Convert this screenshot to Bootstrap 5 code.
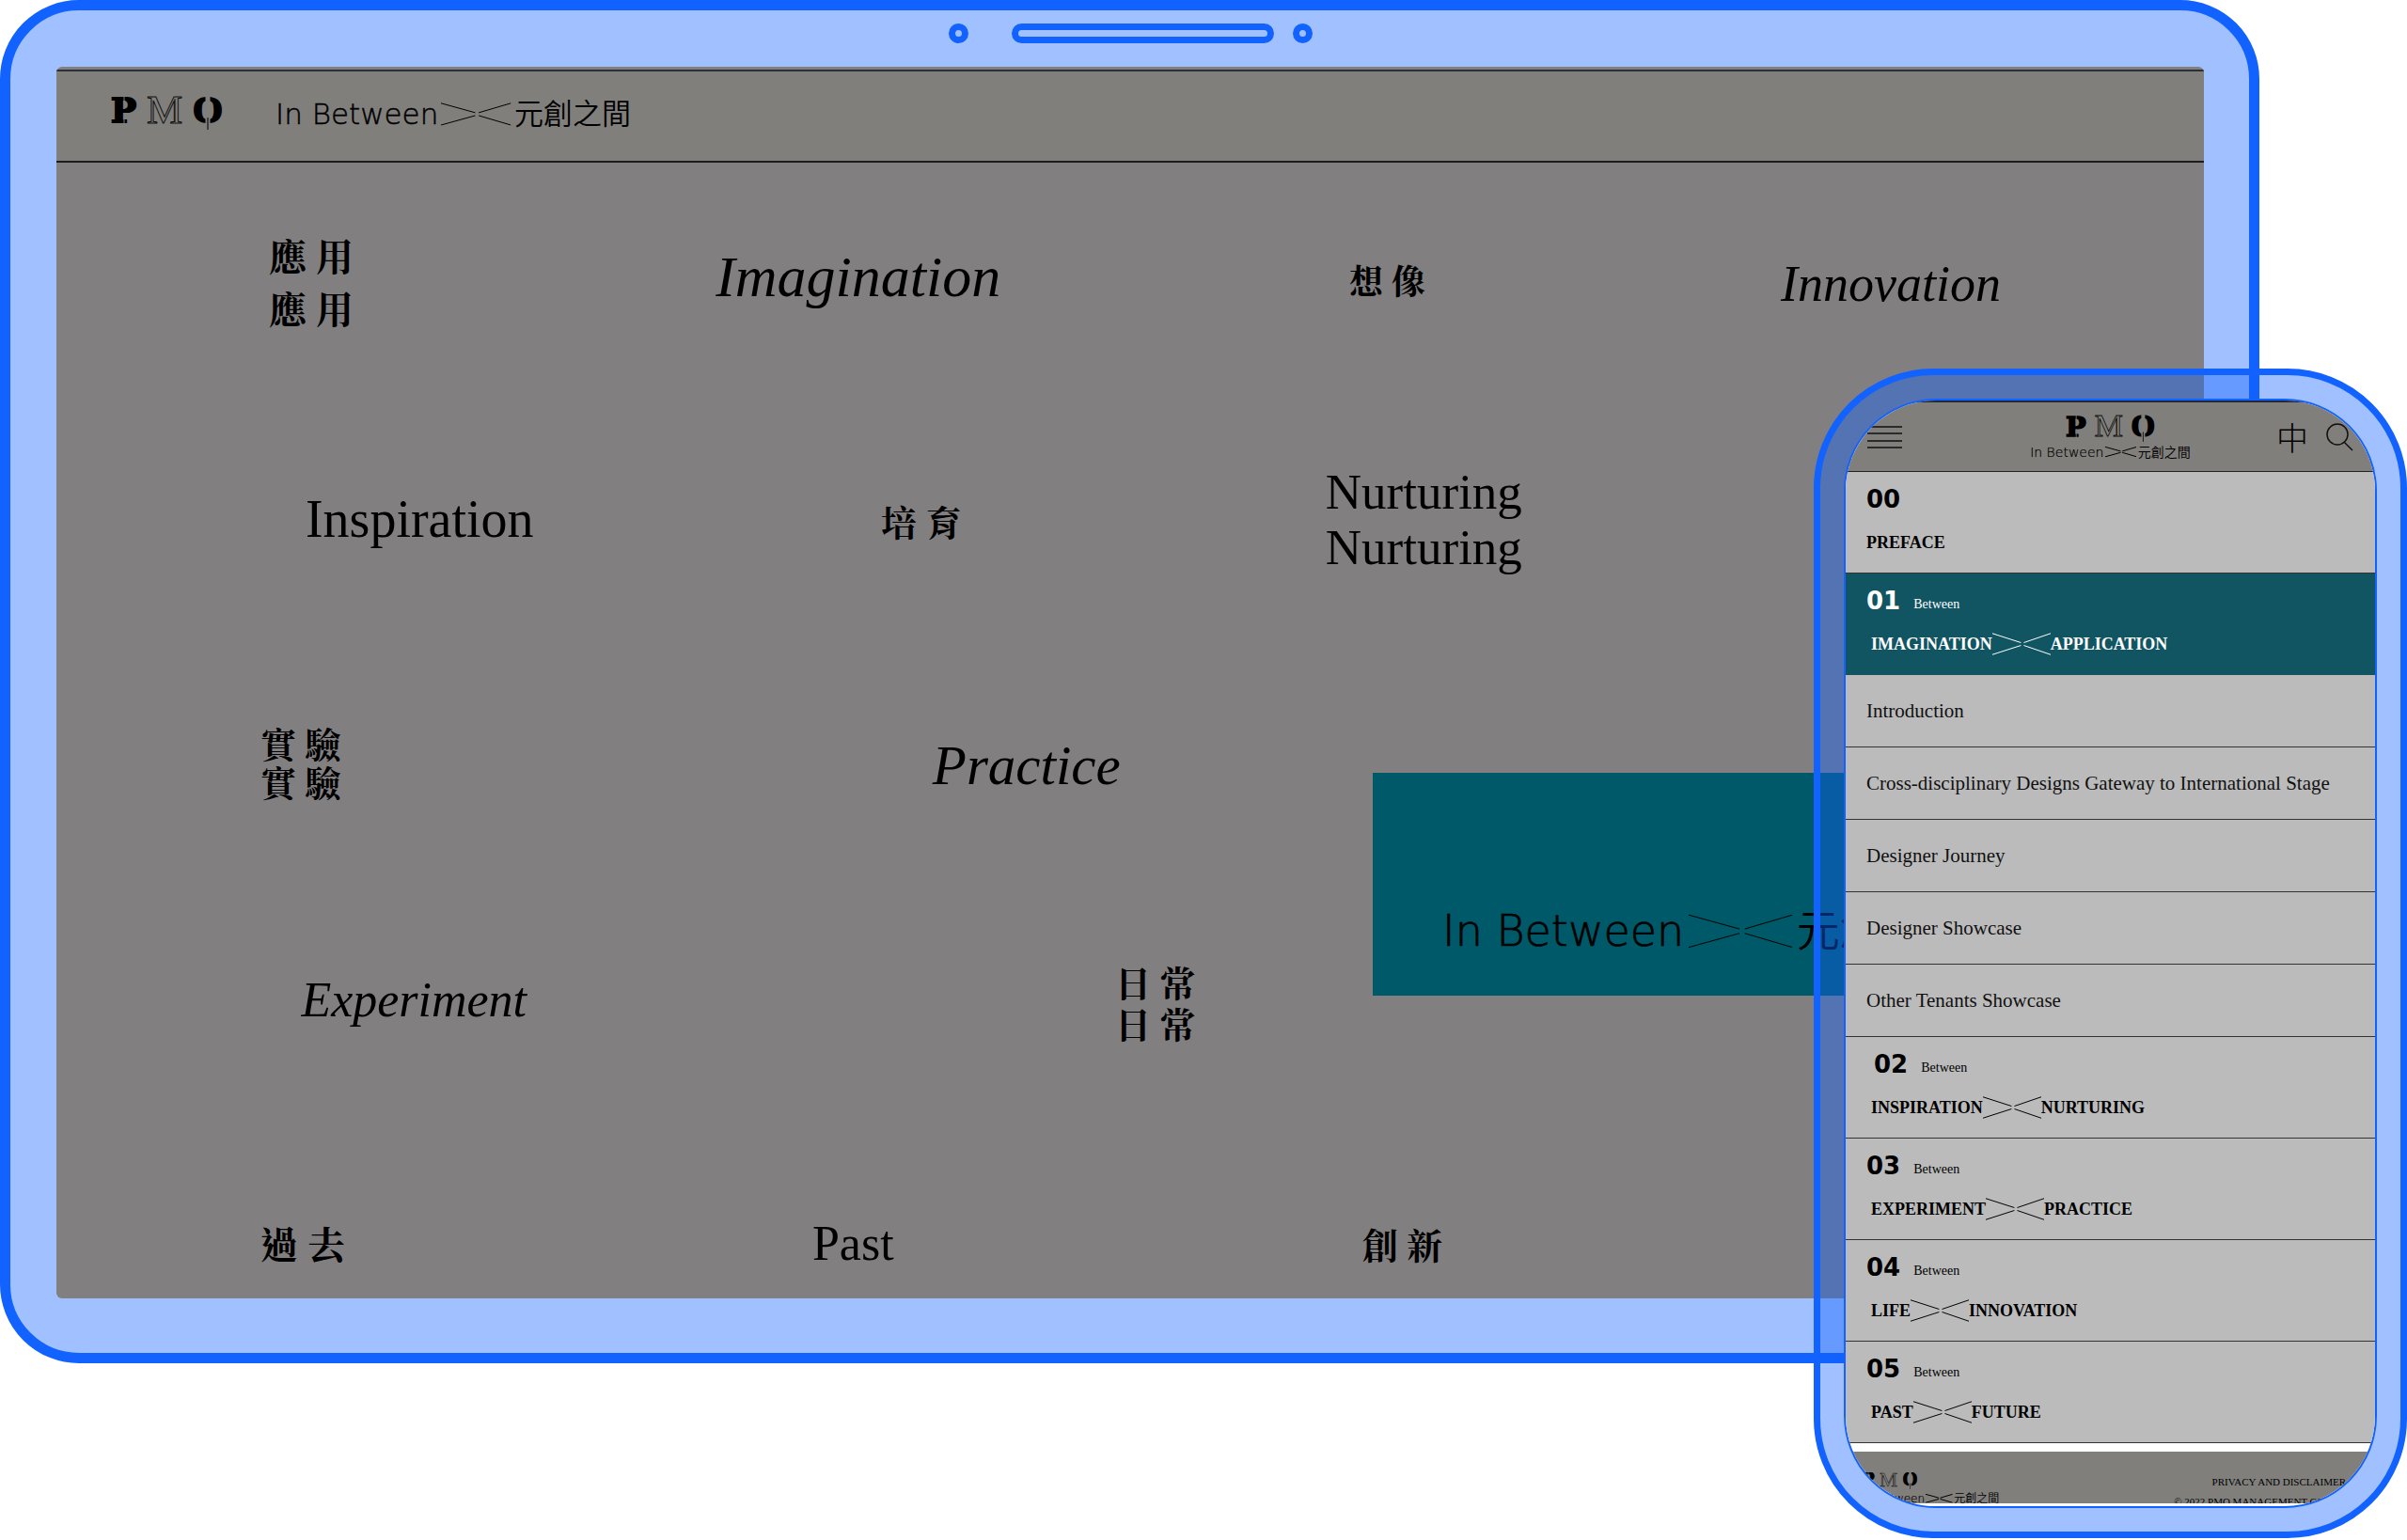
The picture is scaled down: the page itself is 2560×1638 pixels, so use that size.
<!DOCTYPE html>
<html lang="en">
<head>
<meta charset="utf-8">
<meta name="viewport" content="width=device-width, initial-scale=1">
<title>PMQ – In Between 元創之間</title>
<link href="https://cdn.jsdelivr.net/npm/bootstrap@5.3.0/dist/css/bootstrap.min.css" rel="stylesheet">
<style>
  :root {
    --frame: #1262ff;
    --glass: rgba(18, 98, 255, .4);
    --stone: #817f7f;
    --bar: #807f7c;
    --paper: #bbbbbb;
    --teal: #005968;
    --serif: "Liberation Serif", "Noto Serif CJK TC", "Noto Sans CJK TC", serif;
    --wide: "DejaVu Sans", "Noto Sans CJK TC", sans-serif;
  }
  body { font-family: var(--serif); color: #000; background: #fff; }
  a { color: inherit; text-decoration: none; }

  /* both devices share one grid cell so the phone lies over the tablet */
  .stage { display: grid; grid-template-columns: minmax(0, 1fr); align-items: start; }
  .stage > * { grid-area: 1 / 1; }

  .tablet {
    margin-right: 157px;
    border: 11px solid var(--frame);
    border-radius: 84px;
    background: var(--glass);
    padding: 0 48px 58px 49px;
  }
  .sensors { height: 60px; padding-top: 14px; }
  .lens, .speaker { height: 21px; border: 7px solid var(--frame); border-radius: 11px; }
  .lens { width: 21px; }
  .speaker { width: 279px; margin: 0 20px 0 46px; }

  .desk { background: var(--stone); border-radius: 6px; padding-top: 3px; overflow: hidden; }
  .desk-bar {
    background: var(--bar);
    border-top: 2px solid #2c3038;
    border-bottom: 2px solid #1c1c1c;
    height: 99px;
    padding: 26px 58px 0;
    gap: 55px;
  }
  .logo-lg { width: 120px; height: 36px; }
  .logo-md { width: 96px; height: 29px; }
  .logo-sm { width: 60px; height: 18px; }

  .between { font-family: var(--wide); font-weight: 200; line-height: 1; white-space: nowrap; -webkit-text-stroke: .015em currentColor; }
  .between svg { width: 2.4em; height: .8em; margin: 0 .1em; }
  .between b { font-weight: 350; -webkit-text-stroke: 0; }
  .size-31 { font-size: 31px; }
  .size-46 { font-size: 46px; }
  .size-14 { font-size: 14px; }
  .size-12 { font-size: 12px; }
  .thin-line { fill: none; stroke: #111; stroke-width: 1.5; }

  /* free canvas of drifting words */
  .canvas { position: relative; height: 1208px; }
  .word { position: absolute; white-space: nowrap; line-height: 60px; }
  .zh { font-weight: 700; font-size: 38px; }
  .zh-lg { font-size: 40px; }
  .zh-sm { font-size: 36px; }
  .en-52 { font-size: 52px; }
  .en-54 { font-size: 54px; }
  .en-56 { font-size: 56px; }
  .en-59 { font-size: 59px; }
  .en-62 { font-size: 62px; }
  .step-59 { font-size: 53px; line-height: 59px; }
  .step-56 { line-height: 56px; }
  .step-44 { line-height: 44px; }
  .step-41 { line-height: 41px; }
  .banner {
    position: absolute; left: 61.3%; top: 649px; right: 0; height: 237px;
    background: var(--teal); padding: 0 0 46px 74px; overflow: hidden;
  }

  .phone {
    justify-self: end;
    width: 631px;
    margin-top: 392px;
    border: 7px solid var(--frame);
    border-radius: 127px;
    background: var(--glass);
    padding: 25px;
    z-index: 1;
  }
  .hand { border: 2px solid var(--frame); border-radius: 98px; background: #fff; overflow: hidden; padding-bottom: 3px; }
  .hand-bar {
    height: 76px; background: var(--bar);
    border-top: 2px solid #1f2a3c; border-bottom: 1px solid #222;
    padding: 0 23px;
  }
  .hand-bar > .side { flex: 1 1 0; }
  .tools { gap: 19px; }
  .plain { background: none; border: 0; padding: 0; line-height: 0; color: #000; }
  .lang { font-family: "Noto Sans CJK TC", sans-serif; font-weight: 300; font-size: 34px; line-height: 40px; }

  .chapters { --bs-list-group-bg: var(--paper); --bs-list-group-color: #000; --bs-list-group-border-radius: 0; }
  .chapters .list-group-item,
  .chapters .list-group-item:last-child { border: 0; border-bottom: 1px solid #333; padding: 15px 22px 20px; }
  .chapters .topic { padding: 25px 22px; font-size: 21px; line-height: 26px; color: #111; white-space: nowrap; }
  .chapters .open { background: #115563; color: #fff; border-bottom-color: #115563; }
  .num { font-family: var(--wide); font-weight: 700; font-size: 26px; line-height: 28px; }
  .tag-line { gap: 14px; }
  .tag-line small { font-size: 14px; line-height: 20px; }
  .heading { font-weight: 700; font-size: 18px; line-height: 24px; margin-top: 20px; }
  .pair { padding-left: 5px; }
  .pair svg { width: 62px; height: 24px; }
  .shifted { padding-left: 8px; }

  .foot { margin-top: 9px; height: 55px; background: var(--bar); padding: 22px 31px 0 17px; overflow: hidden; }
  .legal { font-size: 11px; line-height: 21px; }
</style>
</head>
<body>

<svg width="0" height="0" class="d-none" aria-hidden="true">
  <symbol id="logo" viewBox="0 0 120 36">
    <text x="0" y="28" font-family="DejaVu Serif" font-weight="700" font-size="36" stroke="#000" stroke-width="2">P</text>
    <path d="M14 0v8M14 19v11" stroke="#807f7c" stroke-width="1"/>
    <text x="38" y="29" font-family="Liberation Serif" font-size="43" fill="none" stroke="#111" stroke-width="1">M</text>
    <path d="M68 3v25" stroke="#111" stroke-width="1" fill="none"/>
    <text x="87" y="28" font-family="Liberation Serif" font-weight="700" font-size="41" stroke="#000" stroke-width="2">O</text>
    <path d="M103 -2v34" stroke="#807f7c" stroke-width="5"/>
    <path d="M103 23v13" stroke="#000" stroke-width="1"/>
  </symbol>
  <symbol id="gap" viewBox="0 0 100 32" preserveAspectRatio="none">
    <path d="M0 1L49 14M0 31L49 18M100 1L54 14M100 31L54 18" fill="none" stroke="currentColor" stroke-width="1" vector-effect="non-scaling-stroke"/>
  </symbol>
</svg>

<main class="stage">
  <section class="tablet" aria-label="Desktop site">
    <div class="sensors d-flex justify-content-center">
      <span class="lens"></span><span class="speaker"></span><span class="lens"></span>
    </div>
    <div class="desk">
      <header class="desk-bar d-flex align-items-start">
        <a href="#" aria-label="PMQ"><svg class="logo-lg d-block"><use href="#logo"/></svg></a>
        <a href="#" class="between size-31 d-flex align-items-center pt-1"><span>In Between</span><svg><use href="#gap"/></svg><b>元創之間</b></a>
      </header>
      <div class="canvas">
        <a href="#" class="word zh zh-lg step-56" style="left:9.9%;top:74px">應 用<br>應 用</a>
        <a href="#" class="word en-62 fst-italic" style="left:30.7%;top:91px">Imagination</a>
        <a href="#" class="word zh zh-sm" style="left:60.2%;top:98px">想 像</a>
        <a href="#" class="word en-54 fst-italic" style="left:80.3%;top:99px">Innovation</a>
        <a href="#" class="word en-56" style="left:11.6%;top:349px">Inspiration</a>
        <a href="#" class="word zh" style="left:38.4%;top:354px">培 育</a>
        <a href="#" class="word step-59" style="left:59.1%;top:321px">Nurturing<br>Nurturing</a>
        <a href="#" class="word zh step-41" style="left:9.5%;top:600px">實 驗<br>實 驗</a>
        <a href="#" class="word en-59 fst-italic" style="left:40.8%;top:611px">Practice</a>
        <a href="#" class="word en-52 fst-italic" style="left:11.4%;top:861px">Experiment</a>
        <a href="#" class="word zh step-44" style="left:49.3%;top:852px">日 常<br>日 常</a>
        <a href="#" class="word zh zh-lg" style="left:9.5%;top:1123px">過 去</a>
        <a href="#" class="word en-52" style="left:35.2%;top:1120px">Past</a>
        <a href="#" class="word zh" style="left:60.8%;top:1123px">創 新</a>
        <div class="banner d-flex align-items-end">
          <div class="between size-46 d-flex align-items-center"><span>In Between</span><svg><use href="#gap"/></svg><b>元創之間</b></div>
        </div>
      </div>
    </div>
  </section>

  <section class="phone" aria-label="Mobile site">
    <div class="hand">
      <header class="hand-bar d-flex align-items-center">
        <div class="side">
          <button class="plain" type="button" aria-label="Menu">
            <svg width="37" height="26" viewBox="0 0 37 26"><path d="M0 2h37M0 9h37M0 17h37M0 24h37" class="thin-line"/></svg>
          </button>
        </div>
        <div class="d-flex flex-column align-items-center gap-1">
          <svg class="logo-md"><use href="#logo"/></svg>
          <div class="between size-14 d-flex align-items-center"><span>In Between</span><svg><use href="#gap"/></svg><b>元創之間</b></div>
        </div>
        <div class="side tools d-flex justify-content-end align-items-center">
          <button class="plain lang" type="button">中</button>
          <button class="plain" type="button" aria-label="Search">
            <svg width="29" height="30" viewBox="0 0 29 30"><circle cx="12" cy="12" r="11" class="thin-line"/><path d="M19 20l9 9" class="thin-line"/></svg>
          </button>
        </div>
      </header>
      <nav class="list-group list-group-flush chapters">
        <a href="#" class="list-group-item"><div class="num">00</div><div class="heading">PREFACE</div></a>
        <a href="#" class="list-group-item open">
          <div class="tag-line d-flex align-items-end"><span class="num">01</span><small>Between</small></div>
          <div class="heading pair d-flex">IMAGINATION<svg><use href="#gap"/></svg>APPLICATION</div>
        </a>
        <a href="#" class="list-group-item topic">Introduction</a>
        <a href="#" class="list-group-item topic">Cross-disciplinary Designs Gateway to International Stage</a>
        <a href="#" class="list-group-item topic">Designer Journey</a>
        <a href="#" class="list-group-item topic">Designer Showcase</a>
        <a href="#" class="list-group-item topic">Other Tenants Showcase</a>
        <a href="#" class="list-group-item">
          <div class="tag-line shifted d-flex align-items-end"><span class="num">02</span><small>Between</small></div>
          <div class="heading pair d-flex">INSPIRATION<svg><use href="#gap"/></svg>NURTURING</div>
        </a>
        <a href="#" class="list-group-item">
          <div class="tag-line d-flex align-items-end"><span class="num">03</span><small>Between</small></div>
          <div class="heading pair d-flex">EXPERIMENT<svg><use href="#gap"/></svg>PRACTICE</div>
        </a>
        <a href="#" class="list-group-item">
          <div class="tag-line d-flex align-items-end"><span class="num">04</span><small>Between</small></div>
          <div class="heading pair d-flex">LIFE<svg><use href="#gap"/></svg>INNOVATION</div>
        </a>
        <a href="#" class="list-group-item">
          <div class="tag-line d-flex align-items-end"><span class="num">05</span><small>Between</small></div>
          <div class="heading pair d-flex">PAST<svg><use href="#gap"/></svg>FUTURE</div>
        </a>
      </nav>
      <footer class="foot d-flex justify-content-between">
        <div>
          <svg class="logo-sm d-block mb-1"><use href="#logo"/></svg>
          <div class="between size-12 d-flex align-items-center"><span>In Between</span><svg><use href="#gap"/></svg><b>元創之間</b></div>
        </div>
        <div class="legal text-end text-nowrap">
          <a href="#">PRIVACY AND DISCLAIMER</a><br>© 2022 PMQ MANAGEMENT CO LTD
        </div>
      </footer>
    </div>
  </section>
</main>

<script src="https://cdn.jsdelivr.net/npm/bootstrap@5.3.0/dist/js/bootstrap.bundle.min.js"></script>
</body>
</html>
